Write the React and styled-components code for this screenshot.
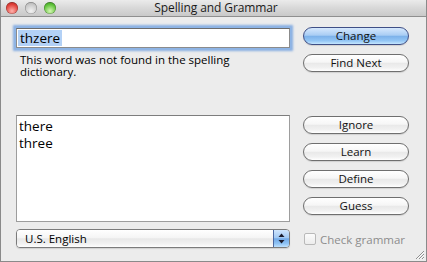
import React from 'react';
import styled, {createGlobalStyle} from 'styled-components';

const GlobalStyle = createGlobalStyle`
  html, body {
    margin: 0;
    padding: 0;
    background: #ececec;
  }

  * {
    box-sizing: border-box;
  }
`;

const font = `"Open Sans", "DejaVu Sans", sans-serif`;

const Window = styled.div`
  position: relative;
  width: 427px;
  height: 262px;
  display: flex;
  flex-direction: column;
  background: #ececec;
  border: 1px solid #8a8a8a;
  border-top: 0;
  font-family: ${font};
  color: #000;
  overflow: hidden;
`;

const TitleBar = styled.div`
  height: 17px;
  display: grid;
  grid-template-columns: 1fr auto 1fr;
  align-items: center;
  padding-left: 5px;
  background: linear-gradient(to bottom, #ebebeb 0%, #d8d8d8 50%, #c9c9c9 100%);
  border-bottom: 1px solid #8f8f8f;
`;

const Lights = styled.div`
  display: flex;
  gap: 7px;
`;

const colors = {
  red: ['#ffb3ad', '#e0413a', '#9c1c16'],
  gray: ['#f2f2f2', '#c9c9c9', '#9a9a9a'],
  green: ['#d6f7b5', '#5fc23a', '#2f7c17'],
};

const Light = styled.span`
  width: 12px;
  height: 12px;
  border-radius: 50%;
  background: radial-gradient(circle at 50% 75%, ${p => colors[p.$c][0]} 0%, ${p => colors[p.$c][1]} 60%, ${p => colors[p.$c][2]} 100%);
  box-shadow: inset 0 0 0 0.5px rgba(0, 0, 0, 0.35);
`;

const Title = styled.div`
  font-size: 12px;
  line-height: 16px;
  color: #1a1a1a;
  letter-spacing: -0.1px;
`;

const Body = styled.div`
  flex: 1;
  display: grid;
  grid-template-columns: 274px 106px;
  grid-template-rows: 88px 114px 19px;
  column-gap: 13px;
  padding: 10px 0 0 15px;
`;

const Column = styled.div`
  display: flex;
  flex-direction: column;
  gap: ${p => p.$gap || 0}px;
  padding-top: ${p => p.$top || 0}px;
`;

const Field = styled.div`
  margin-top: 1px;
  height: 20px;
  background: #fff;
  border: 1px solid #8b8b8b;
  border-top-color: #6c6c6c;
  box-shadow: 0 0 0 1px #8db4e6, 0 0 2px 3px rgba(96, 150, 222, 0.7);
  padding: 1px 0 0 1px;
  font-size: 13.5px;
  line-height: 16px;
`;

const Selected = styled.span`
  display: inline-block;
  background: #b3d1f6;
  padding: 0 2px 0 2px;
  height: 16px;
`;

const Message = styled.div`
  width: 240px;
  margin-top: 6px;
  padding-left: 4px;
  font-size: 11.5px;
  line-height: 11.5px;
`;

const List = styled.div`
  height: 107px;
  background: #fff;
  border: 1px solid #9d9d9d;
  border-top-color: #7d7d7d;
  padding: 2px 0 0 2px;
`;

const Item = styled.div`
  font-size: 13.5px;
  line-height: 17px;
`;

const Button = styled.button`
  width: 106px;
  height: 18px;
  padding: 0;
  border-radius: 9px;
  font-family: ${font};
  font-size: 11.5px;
  line-height: 16px;
  color: #111;
  border: 1px solid ${p => (p.$primary ? '#3f4f86' : '#6f6f6f')};
  background: ${p =>
    p.$primary
      ? 'linear-gradient(to bottom, #d6e8fd 0%, #a9cdf4 45%, #7db2ea 52%, #93c6f5 80%, #c4e6ff 100%)'
      : 'linear-gradient(to bottom, #ffffff 0%, #f6f6f6 45%, #e9e9e9 52%, #f1f1f1 80%, #ffffff 100%)'};
  box-shadow: 0 1px 1px rgba(0, 0, 0, 0.12);
`;

const Popup = styled.div`
  height: 19px;
  display: flex;
  border: 1px solid #7b7b7b;
  border-radius: 4px;
  overflow: hidden;
  box-shadow: 0 1px 1px rgba(0, 0, 0, 0.12);
`;

const PopupLabel = styled.div`
  flex: 1;
  padding-left: 8px;
  font-size: 11.5px;
  line-height: 17px;
  background: linear-gradient(to bottom, #ffffff 0%, #f5f5f5 45%, #e8e8e8 52%, #f1f1f1 80%, #fdfdfd 100%);
`;

const PopupArrows = styled.div`
  width: 16px;
  display: flex;
  align-items: center;
  justify-content: center;
  border-left: 1px solid #4b67a0;
  background: linear-gradient(to bottom, #d0e5fc 0%, #a2c9f3 45%, #72a9e7 52%, #8fc3f4 80%, #c0e2ff 100%);
`;

const CheckRow = styled.label`
  display: flex;
  align-items: center;
  gap: 4px;
  padding: 1px 0 0 1px;
  font-size: 11.5px;
  color: #8d8d8d;
`;

const CheckBox = styled.span`
  width: 12px;
  height: 12px;
  border-radius: 2px;
  border: 1px solid #b9b9b9;
  background: linear-gradient(to bottom, #fbfbfb, #ececec);
`;

const Grip = styled.svg`
  position: absolute;
  right: 1px;
  bottom: 1px;
`;

const App = () => {
  return (
    <>
      <GlobalStyle/>
      <Window>
        <TitleBar>
          <Lights>
            <Light $c="red"/>
            <Light $c="gray"/>
            <Light $c="green"/>
          </Lights>
          <Title>Spelling and Grammar</Title>
          <div/>
        </TitleBar>
        <Body>
          <Column>
            <Field>
              <Selected>thzere</Selected>
            </Field>
            <Message>This word was not found in the spelling dictionary.</Message>
          </Column>
          <Column $gap={9}>
            <Button $primary>Change</Button>
            <Button>Find Next</Button>
          </Column>
          <List>
            <Item>there</Item>
            <Item>three</Item>
          </List>
          <Column $gap={9} $top={1}>
            <Button>Ignore</Button>
            <Button>Learn</Button>
            <Button>Define</Button>
            <Button>Guess</Button>
          </Column>
          <Popup>
            <PopupLabel>U.S. English</PopupLabel>
            <PopupArrows>
              <svg width="7" height="11" viewBox="0 0 7 11">
                <path d="M3.5 0.5 L6.5 4 L0.5 4 Z" fill="#1b1b2b"/>
                <path d="M3.5 10.5 L6.5 7 L0.5 7 Z" fill="#1b1b2b"/>
              </svg>
            </PopupArrows>
          </Popup>
          <CheckRow>
            <CheckBox/>
            Check grammar
          </CheckRow>
        </Body>
        <Grip width="12" height="12" viewBox="0 0 12 12">
          <path d="M11 3 L3 11 M11 6 L6 11 M11 9 L9 11" stroke="#8f8f8f" strokeWidth="1"/>
          <path d="M11 4 L4 11 M11 7 L7 11 M11 10 L10 11" stroke="#fafafa" strokeWidth="1"/>
        </Grip>
      </Window>
    </>
  );
};

export default App;
